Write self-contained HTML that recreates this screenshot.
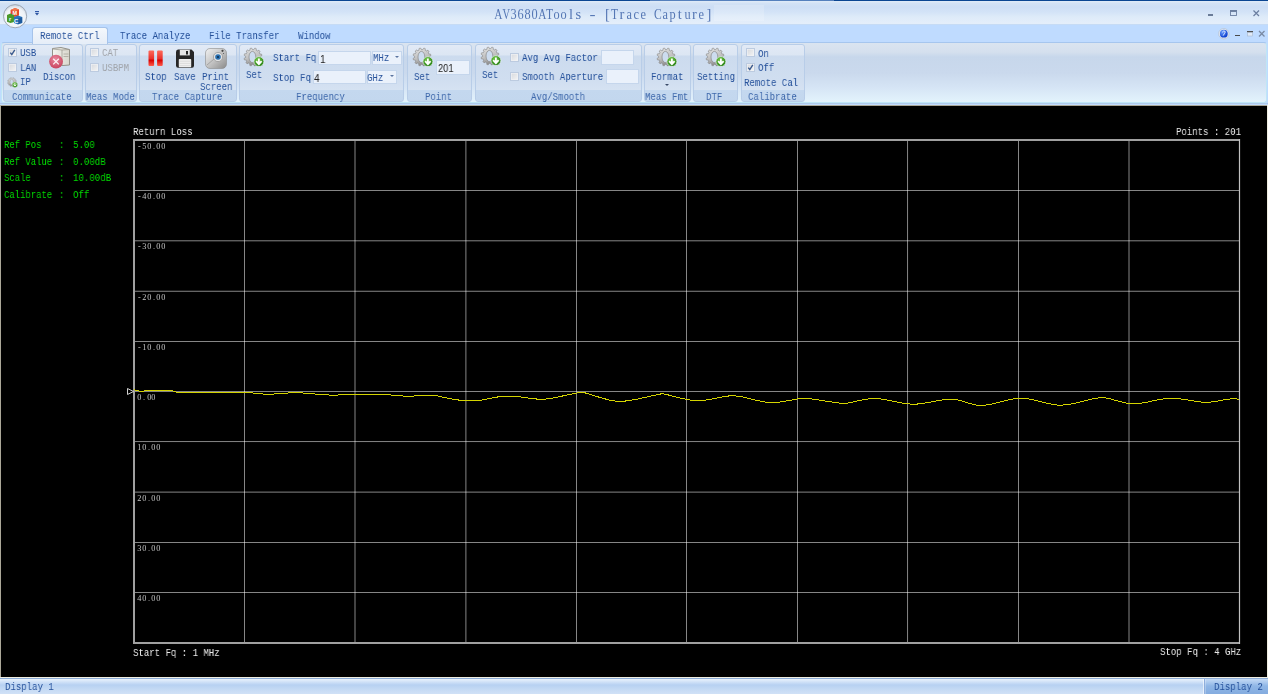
<!DOCTYPE html><html><head><meta charset="utf-8"><style>
html,body{margin:0;padding:0;width:1268px;height:694px;overflow:hidden;background:#bfdbff;position:relative}
.t{position:absolute;white-space:pre;transform-origin:0 0;will-change:transform}
</style></head><body>
<div style="position:absolute;left:0px;top:0px;width:1268px;height:24px;background:linear-gradient(#dde9f7 0px,#dde9f7 2px,#d3e2f5 3px,#cddef5 7px,#d3e3f7 12px,#deebf9 17px,#e4eefa 23px,#e4eefa 24px)"></div>
<div style="position:absolute;left:0px;top:0px;width:1268px;height:1px;background:#0a4592"></div>
<div style="position:absolute;left:650px;top:0px;width:184px;height:1px;background:#5580bd"></div>
<div style="position:absolute;left:714px;top:5px;width:50px;height:16px;background:rgba(255,255,255,0.18)"></div>
<div class="t" style="left:494.50px;top:7.00px;font-size:14.5px;line-height:14.5px;font-family:'Liberation Serif';color:#5476b4;font-weight:normal"><span style="display:inline-flex;justify-content:center;width:7.25px"><span style="display:inline-block;flex:none;transform:scaleX(0.780)">A</span></span><span style="display:inline-flex;justify-content:center;width:7.25px"><span style="display:inline-block;flex:none;transform:scaleX(0.720)">V</span></span><span style="display:inline-flex;justify-content:center;width:7.25px"><span style="display:inline-block;flex:none;transform:scaleX(0.850)">3</span></span><span style="display:inline-flex;justify-content:center;width:7.25px"><span style="display:inline-block;flex:none;transform:scaleX(0.850)">6</span></span><span style="display:inline-flex;justify-content:center;width:7.25px"><span style="display:inline-block;flex:none;transform:scaleX(0.850)">8</span></span><span style="display:inline-flex;justify-content:center;width:7.25px"><span style="display:inline-block;flex:none;transform:scaleX(0.850)">0</span></span><span style="display:inline-flex;justify-content:center;width:7.25px"><span style="display:inline-block;flex:none;transform:scaleX(0.780)">A</span></span><span style="display:inline-flex;justify-content:center;width:7.25px"><span style="display:inline-block;flex:none;transform:scaleX(0.800)">T</span></span><span style="display:inline-flex;justify-content:center;width:7.25px"><span style="display:inline-block;flex:none;transform:scaleX(0.850)">o</span></span><span style="display:inline-flex;justify-content:center;width:7.25px"><span style="display:inline-block;flex:none;transform:scaleX(0.850)">o</span></span><span style="display:inline-flex;justify-content:center;width:7.25px"><span style="display:inline-block;flex:none;transform:scaleX(1.000)">l</span></span><span style="display:inline-flex;justify-content:center;width:7.25px"><span style="display:inline-block;flex:none;transform:scaleX(1.000)">s</span></span><span style="display:inline-flex;justify-content:center;width:7.25px"><span style="display:inline-block;flex:none;transform:scaleX(1.000)">&nbsp;</span></span><span style="display:inline-flex;justify-content:center;width:7.25px"><span style="display:inline-block;flex:none;transform:scaleX(1.250)">-</span></span><span style="display:inline-flex;justify-content:center;width:7.25px"><span style="display:inline-block;flex:none;transform:scaleX(1.000)">&nbsp;</span></span><span style="display:inline-flex;justify-content:center;width:7.25px"><span style="display:inline-block;flex:none;transform:scaleX(1.000)">[</span></span><span style="display:inline-flex;justify-content:center;width:7.25px"><span style="display:inline-block;flex:none;transform:scaleX(0.800)">T</span></span><span style="display:inline-flex;justify-content:center;width:7.25px"><span style="display:inline-block;flex:none;transform:scaleX(1.000)">r</span></span><span style="display:inline-flex;justify-content:center;width:7.25px"><span style="display:inline-block;flex:none;transform:scaleX(0.850)">a</span></span><span style="display:inline-flex;justify-content:center;width:7.25px"><span style="display:inline-block;flex:none;transform:scaleX(0.850)">c</span></span><span style="display:inline-flex;justify-content:center;width:7.25px"><span style="display:inline-block;flex:none;transform:scaleX(0.850)">e</span></span><span style="display:inline-flex;justify-content:center;width:7.25px"><span style="display:inline-block;flex:none;transform:scaleX(1.000)">&nbsp;</span></span><span style="display:inline-flex;justify-content:center;width:7.25px"><span style="display:inline-block;flex:none;transform:scaleX(0.800)">C</span></span><span style="display:inline-flex;justify-content:center;width:7.25px"><span style="display:inline-block;flex:none;transform:scaleX(0.850)">a</span></span><span style="display:inline-flex;justify-content:center;width:7.25px"><span style="display:inline-block;flex:none;transform:scaleX(0.850)">p</span></span><span style="display:inline-flex;justify-content:center;width:7.25px"><span style="display:inline-block;flex:none;transform:scaleX(1.000)">t</span></span><span style="display:inline-flex;justify-content:center;width:7.25px"><span style="display:inline-block;flex:none;transform:scaleX(0.850)">u</span></span><span style="display:inline-flex;justify-content:center;width:7.25px"><span style="display:inline-block;flex:none;transform:scaleX(1.000)">r</span></span><span style="display:inline-flex;justify-content:center;width:7.25px"><span style="display:inline-block;flex:none;transform:scaleX(0.850)">e</span></span><span style="display:inline-flex;justify-content:center;width:7.25px"><span style="display:inline-block;flex:none;transform:scaleX(1.000)">]</span></span></div>
<div style="position:absolute;left:1208px;top:14px;width:5px;height:2px;background:#6a7c98"></div>
<svg style="position:absolute;left:1229px;top:9px" width="10" height="8"><rect x="1.5" y="2.5" width="6" height="4" fill="none" stroke="#6a7ea0" stroke-width="0.9"/><rect x="1" y="1" width="7" height="1.6" fill="#6a7ea0"/></svg>
<svg style="position:absolute;left:1252px;top:9px" width="9" height="9"><path d="M1.5 1.5 L7 7 M7 1.5 L1.5 7" stroke="#6a7ea0" stroke-width="1.2"/></svg>
<svg style="position:absolute;left:34px;top:11px" width="6" height="6"><rect x="1" y="0" width="4" height="1.2" fill="#2f58a8"/><path d="M1 2 L5 2 L3 4.4 Z" fill="#2a52a0"/></svg>
<div style="position:absolute;left:0px;top:24px;width:1268px;height:1px;background:#c6dbf5"></div>
<div style="position:absolute;left:0px;top:25px;width:1268px;height:17px;background:#bfdbff"></div>
<div class="t" style="left:119.72px;top:30.00px;font-size:11.5px;line-height:11.5px;font-family:'Liberation Mono';color:#24509a;transform:scaleX(0.785);font-weight:normal;">Trace Analyze</div>
<div class="t" style="left:208.72px;top:30.00px;font-size:11.5px;line-height:11.5px;font-family:'Liberation Mono';color:#24509a;transform:scaleX(0.785);font-weight:normal;">File Transfer</div>
<div class="t" style="left:298.21px;top:30.00px;font-size:11.5px;line-height:11.5px;font-family:'Liberation Mono';color:#24509a;transform:scaleX(0.785);font-weight:normal;">Window</div>
<svg style="position:absolute;left:1218px;top:28px" width="12" height="12"><defs><radialGradient id="hb" cx="35%" cy="30%" r="70%"><stop offset="0" stop-color="#6aa0ff"/><stop offset="1" stop-color="#0a3ccc"/></radialGradient></defs><circle cx="5.8" cy="5.7" r="5.2" fill="#e4ecf6" stroke="#b8c4d4" stroke-width="0.8"/><circle cx="5.8" cy="5.7" r="3.9" fill="url(#hb)"/><path d="M4.3 4.2 Q5.2 2.6 6.9 3.2 Q7.8 3.9 6.6 5.2 L5.2 7.6" stroke="#dfe8ff" stroke-width="1" fill="none"/></svg>
<div style="position:absolute;left:1235px;top:35px;width:5px;height:1px;background:#4a4a4a"></div>
<svg style="position:absolute;left:1246px;top:30px" width="8" height="8"><rect x="1" y="1" width="6" height="1.6" fill="#505050"/><rect x="1.5" y="2.5" width="5" height="3.5" fill="#e0eaf8" stroke="#a8b8cc" stroke-width="0.6"/></svg>
<svg style="position:absolute;left:1258px;top:30px" width="8" height="8"><path d="M1 1 L6.5 6.5 M6.5 1 L1 6.5" stroke="#7a8aa4" stroke-width="1.3"/></svg>
<div style="position:absolute;left:0px;top:42px;width:1268px;height:64px;background:#bfdbff"></div>
<div style="position:absolute;left:0px;top:103px;width:1268px;height:1px;background:#afc9ea"></div>
<div style="position:absolute;left:1px;top:42px;width:1266px;height:61px;background:linear-gradient(#dae4f0 0px,#d5e0ee 9px,#c7d7eb 14px,#cad9ed 30px,#d6e5f5 45px,#e2f2fc 58px);border:1px solid #bfe6f6;border-top-color:#a6c6ee;border-radius:3px;box-sizing:border-box"></div>
<div style="position:absolute;left:3px;top:44px;width:80px;height:58px;background:linear-gradient(#e2eaf6 0px,#dce6f3 10px,#ccdbee 11px,#d0def0 35px,#d5e2f2 45px,#c4d8ef 45px,#c3d7ee 56px);border:1px solid #b8cde8;border-radius:3px;box-sizing:border-box"></div>
<div class="t" style="left:12.02px;top:90.50px;font-size:11.5px;line-height:11.5px;font-family:'Liberation Mono';color:#3e68ab;transform:scaleX(0.785);font-weight:normal;">Communicate</div>
<div style="position:absolute;left:85px;top:44px;width:52px;height:58px;background:linear-gradient(#e2eaf6 0px,#dce6f3 10px,#ccdbee 11px,#d0def0 35px,#d5e2f2 45px,#c4d8ef 45px,#c3d7ee 56px);border:1px solid #b8cde8;border-radius:3px;box-sizing:border-box"></div>
<div class="t" style="left:85.62px;top:90.50px;font-size:11.5px;line-height:11.5px;font-family:'Liberation Mono';color:#3e68ab;transform:scaleX(0.785);font-weight:normal;">Meas Mode</div>
<div style="position:absolute;left:139px;top:44px;width:98px;height:58px;background:linear-gradient(#e2eaf6 0px,#dce6f3 10px,#ccdbee 11px,#d0def0 35px,#d5e2f2 45px,#c4d8ef 45px,#c3d7ee 56px);border:1px solid #b8cde8;border-radius:3px;box-sizing:border-box"></div>
<div class="t" style="left:152.22px;top:90.50px;font-size:11.5px;line-height:11.5px;font-family:'Liberation Mono';color:#3e68ab;transform:scaleX(0.785);font-weight:normal;">Trace Capture</div>
<div style="position:absolute;left:239px;top:44px;width:165px;height:58px;background:linear-gradient(#e2eaf6 0px,#dce6f3 10px,#ccdbee 11px,#d0def0 35px,#d5e2f2 45px,#c4d8ef 45px,#c3d7ee 56px);border:1px solid #b8cde8;border-radius:3px;box-sizing:border-box"></div>
<div class="t" style="left:296.31px;top:90.50px;font-size:11.5px;line-height:11.5px;font-family:'Liberation Mono';color:#3e68ab;transform:scaleX(0.785);font-weight:normal;">Frequency</div>
<div style="position:absolute;left:407px;top:44px;width:65px;height:58px;background:linear-gradient(#e2eaf6 0px,#dce6f3 10px,#ccdbee 11px,#d0def0 35px,#d5e2f2 45px,#c4d8ef 45px,#c3d7ee 56px);border:1px solid #b8cde8;border-radius:3px;box-sizing:border-box"></div>
<div class="t" style="left:425.21px;top:90.50px;font-size:11.5px;line-height:11.5px;font-family:'Liberation Mono';color:#3e68ab;transform:scaleX(0.785);font-weight:normal;">Point</div>
<div style="position:absolute;left:475px;top:44px;width:167px;height:58px;background:linear-gradient(#e2eaf6 0px,#dce6f3 10px,#ccdbee 11px,#d0def0 35px,#d5e2f2 45px,#c4d8ef 45px,#c3d7ee 56px);border:1px solid #b8cde8;border-radius:3px;box-sizing:border-box"></div>
<div class="t" style="left:531.22px;top:90.50px;font-size:11.5px;line-height:11.5px;font-family:'Liberation Mono';color:#3e68ab;transform:scaleX(0.785);font-weight:normal;">Avg/Smooth</div>
<div style="position:absolute;left:644px;top:44px;width:47px;height:58px;background:linear-gradient(#e2eaf6 0px,#dce6f3 10px,#ccdbee 11px,#d0def0 35px,#d5e2f2 45px,#c4d8ef 45px,#c3d7ee 56px);border:1px solid #b8cde8;border-radius:3px;box-sizing:border-box"></div>
<div class="t" style="left:645.22px;top:90.50px;font-size:11.5px;line-height:11.5px;font-family:'Liberation Mono';color:#3e68ab;transform:scaleX(0.785);font-weight:normal;">Meas Fmt</div>
<div style="position:absolute;left:693px;top:44px;width:45px;height:58px;background:linear-gradient(#e2eaf6 0px,#dce6f3 10px,#ccdbee 11px,#d0def0 35px,#d5e2f2 45px,#c4d8ef 45px,#c3d7ee 56px);border:1px solid #b8cde8;border-radius:3px;box-sizing:border-box"></div>
<div class="t" style="left:706.22px;top:90.50px;font-size:11.5px;line-height:11.5px;font-family:'Liberation Mono';color:#3e68ab;transform:scaleX(0.785);font-weight:normal;">DTF</div>
<div style="position:absolute;left:741px;top:44px;width:64px;height:58px;background:linear-gradient(#e2eaf6 0px,#dce6f3 10px,#ccdbee 11px,#d0def0 35px,#d5e2f2 45px,#c4d8ef 45px,#c3d7ee 56px);border:1px solid #b8cde8;border-radius:3px;box-sizing:border-box"></div>
<div class="t" style="left:747.82px;top:90.50px;font-size:11.5px;line-height:11.5px;font-family:'Liberation Mono';color:#3e68ab;transform:scaleX(0.785);font-weight:normal;">Calibrate</div>
<div style="position:absolute;left:32px;top:27px;width:76px;height:17px;background:linear-gradient(#f4f8fc 0px,#eef3fa 6px,#e6edf7 16px);border:1px solid #a6c3ea;border-bottom:none;border-radius:3px 3px 0 0;box-sizing:border-box"></div>
<div style="position:absolute;left:33px;top:42px;width:74px;height:2px;background:#e6eef8"></div>
<div class="t" style="left:40.22px;top:30.00px;font-size:11.5px;line-height:11.5px;font-family:'Liberation Mono';color:#24509a;transform:scaleX(0.785);font-weight:normal;">Remote Ctrl</div>
<svg style="position:absolute;left:2px;top:3px" width="27" height="27" viewBox="0 0 27 27">
<defs><radialGradient id="ab" cx="50%" cy="60%" r="60%"><stop offset="0" stop-color="#ffffff"/><stop offset="0.75" stop-color="#eef2f7"/><stop offset="1" stop-color="#c5cfdb"/></radialGradient></defs>
<circle cx="13.1" cy="13.2" r="11.6" fill="url(#ab)" stroke="#9ea8b6" stroke-width="1"/>
<path d="M8.6 7 L13 5 L17 6.5 L17 12.5 L12.6 14 L8.6 12.5 Z" fill="#e24a28"/>
<path d="M8.6 7 L13 5 L17 6.5 L12.6 8.2 Z" fill="#f07a50"/>
<path d="M5 12 L8.5 10.5 L12 12 L12 19 L8.5 20 L5 18.8 Z" fill="#4a9a2a"/>
<path d="M12 14 L16 12.5 L20.2 14 L20.2 20 L16 21.4 L12 20 Z" fill="#2a74bd"/>
<path d="M16 15.5 L16 21 L20.2 19.8 L20.2 14.2 Z" fill="#1d5a9e"/>
<text x="12.8" y="12" font-family="Liberation Sans" font-size="5.5" font-weight="bold" fill="#fff" text-anchor="middle">M</text>
<text x="8" y="18" font-family="Liberation Sans" font-size="5.5" font-weight="bold" fill="#fff" text-anchor="middle">r</text>
<text x="14.2" y="19.6" font-family="Liberation Sans" font-size="6" font-weight="bold" fill="#fff" text-anchor="middle">C</text>
</svg>
<svg style="position:absolute;left:8px;top:48px" width="9" height="9"><defs><linearGradient id="cb8_48" x1="0" y1="0" x2="1" y2="1"><stop offset="0" stop-color="#d4d7dc"/><stop offset="1" stop-color="#f6f6f6"/></linearGradient></defs><rect x="0.5" y="0.5" width="8" height="8" fill="url(#cb8_48)" stroke="#bccbe0" stroke-width="1"/><rect x="1.5" y="1.5" width="6" height="6" fill="none" stroke="#f2f4f7" stroke-width="0.6"/><path d="M2.3 4.6 L3.8 6.6 L6.8 1.8" stroke="#3a5a8e" stroke-width="1.4" fill="none"/></svg>
<div class="t" style="left:19.71px;top:46.70px;font-size:11.5px;line-height:11.5px;font-family:'Liberation Mono';color:#24509a;transform:scaleX(0.785);font-weight:normal;">USB</div>
<svg style="position:absolute;left:8px;top:63px" width="9" height="9"><defs><linearGradient id="cb8_63" x1="0" y1="0" x2="1" y2="1"><stop offset="0" stop-color="#d4d7dc"/><stop offset="1" stop-color="#f6f6f6"/></linearGradient></defs><rect x="0.5" y="0.5" width="8" height="8" fill="url(#cb8_63)" stroke="#bccbe0" stroke-width="1"/><rect x="1.5" y="1.5" width="6" height="6" fill="none" stroke="#f2f4f7" stroke-width="0.6"/></svg>
<div class="t" style="left:19.71px;top:62.20px;font-size:11.5px;line-height:11.5px;font-family:'Liberation Mono';color:#24509a;transform:scaleX(0.785);font-weight:normal;">LAN</div>
<svg style="position:absolute;left:6.80px;top:76.50px" width="12.00" height="12.00" viewBox="0 0 24 24">
<defs><linearGradient id="gg1" x1="0.2" y1="0" x2="0.5" y2="1"><stop offset="0" stop-color="#e2e2e2"/><stop offset="0.55" stop-color="#c0c0c0"/><stop offset="1" stop-color="#848484"/></linearGradient>
<radialGradient id="gr1" cx="40%" cy="30%" r="70%"><stop offset="0" stop-color="#74c848"/><stop offset="1" stop-color="#278016"/></radialGradient></defs>
<polygon points="11.23,1.89 11.81,1.18 12.27,1.29 12.72,1.42 13.17,1.58 13.28,2.49 13.31,3.38 13.65,3.57 13.99,3.77 14.31,3.98 15.12,3.59 15.97,3.27 16.32,3.59 16.65,3.93 16.95,4.29 16.60,5.13 16.18,5.93 16.38,6.25 16.57,6.59 16.74,6.94 17.63,7.01 18.54,7.16 18.68,7.61 18.79,8.07 18.88,8.53 18.15,9.09 17.39,9.56 17.40,9.95 17.39,10.33 17.36,10.72 18.11,11.23 18.82,11.81 18.71,12.27 18.58,12.72 18.42,13.17 17.51,13.28 16.62,13.31 16.43,13.65 16.23,13.99 16.02,14.31 16.41,15.12 16.73,15.97 16.41,16.32 16.07,16.65 15.71,16.95 14.87,16.60 14.07,16.18 13.75,16.38 13.41,16.57 13.06,16.74 12.99,17.63 12.84,18.54 12.39,18.68 11.93,18.79 11.47,18.88 10.91,18.15 10.44,17.39 10.05,17.40 9.67,17.39 9.28,17.36 8.77,18.11 8.19,18.82 7.73,18.71 7.28,18.58 6.83,18.42 6.72,17.51 6.69,16.62 6.35,16.43 6.01,16.23 5.69,16.02 4.88,16.41 4.03,16.73 3.68,16.41 3.35,16.07 3.05,15.71 3.40,14.87 3.82,14.07 3.62,13.75 3.43,13.41 3.26,13.06 2.37,12.99 1.46,12.84 1.32,12.39 1.21,11.93 1.12,11.47 1.85,10.91 2.61,10.44 2.60,10.05 2.61,9.67 2.64,9.28 1.89,8.77 1.18,8.19 1.29,7.73 1.42,7.28 1.58,6.83 2.49,6.72 3.38,6.69 3.57,6.35 3.77,6.01 3.98,5.69 3.59,4.88 3.27,4.03 3.59,3.68 3.93,3.35 4.29,3.05 5.13,3.40 5.93,3.82 6.25,3.62 6.59,3.43 6.94,3.26 7.01,2.37 7.16,1.46 7.61,1.32 8.07,1.21 8.53,1.12 9.09,1.85 9.56,2.61 9.95,2.60 10.33,2.61 10.72,2.64" fill="url(#gg1)" stroke="#8a8a8a" stroke-width="0.7"/>
<ellipse cx="9.4" cy="10" rx="3.4" ry="5.6" fill="#cddcef" stroke="#8a8a8a" stroke-width="0.7"/>
<circle cx="15.8" cy="15.6" r="5.4" fill="url(#gr1)" stroke="#eef4fa" stroke-width="0.7"/><path d="M15.8 12.399999999999999 L15.8 17.6 M13.100000000000001 15.2 L15.8 18.1 L18.5 15.2" stroke="#fff" stroke-width="1.8" fill="none"/>
</svg>
<div class="t" style="left:19.71px;top:75.70px;font-size:11.5px;line-height:11.5px;font-family:'Liberation Mono';color:#24509a;transform:scaleX(0.785);font-weight:normal;">IP</div>
<svg style="position:absolute;left:48px;top:46px" width="24" height="24" viewBox="0 0 24 24">
<defs><linearGradient id="sv" x1="0" y1="0" x2="1" y2="0"><stop offset="0" stop-color="#f4f4f0"/><stop offset="1" stop-color="#d8d6cc"/></linearGradient>
<radialGradient id="rc" cx="45%" cy="35%" r="65%"><stop offset="0" stop-color="#ea8aa0"/><stop offset="1" stop-color="#c8445f"/></radialGradient></defs>
<path d="M4.5 2.5 L13 1.5 L21.5 3.5 L21.5 19 L15 19.5 L4.5 18.5 Z" fill="url(#sv)" stroke="#8a887e" stroke-width="0.9"/>
<path d="M4.5 3 L14 4 L21.5 3.5 M14 4 V19.5" stroke="#9a978c" stroke-width="0.7" fill="none"/>
<path d="M15.5 8 H20.5 M15.5 10.5 H20.5" stroke="#a8a69c" stroke-width="0.8"/>
<circle cx="8" cy="15.6" r="6.9" fill="url(#rc)"/>
<path d="M5.2 12.8 L10.8 18.4 M10.8 12.8 L5.2 18.4" stroke="#fff" stroke-width="1.3" opacity="0.9"/>
</svg>
<div class="t" style="left:43.22px;top:70.50px;font-size:11.5px;line-height:11.5px;font-family:'Liberation Mono';color:#24509a;transform:scaleX(0.785);font-weight:normal;">Discon</div>
<svg style="position:absolute;left:90px;top:48px" width="9" height="9"><defs><linearGradient id="cb90_48" x1="0" y1="0" x2="1" y2="1"><stop offset="0" stop-color="#d4d7dc"/><stop offset="1" stop-color="#f6f6f6"/></linearGradient></defs><rect x="0.5" y="0.5" width="8" height="8" fill="url(#cb90_48)" stroke="#bccbe0" stroke-width="1"/><rect x="1.5" y="1.5" width="6" height="6" fill="none" stroke="#f2f4f7" stroke-width="0.6"/></svg>
<div class="t" style="left:102.22px;top:46.70px;font-size:11.5px;line-height:11.5px;font-family:'Liberation Mono';color:#a0a4aa;transform:scaleX(0.785);font-weight:normal;">CAT</div>
<svg style="position:absolute;left:90px;top:63px" width="9" height="9"><defs><linearGradient id="cb90_63" x1="0" y1="0" x2="1" y2="1"><stop offset="0" stop-color="#d4d7dc"/><stop offset="1" stop-color="#f6f6f6"/></linearGradient></defs><rect x="0.5" y="0.5" width="8" height="8" fill="url(#cb90_63)" stroke="#bccbe0" stroke-width="1"/><rect x="1.5" y="1.5" width="6" height="6" fill="none" stroke="#f2f4f7" stroke-width="0.6"/></svg>
<div class="t" style="left:102.22px;top:61.70px;font-size:11.5px;line-height:11.5px;font-family:'Liberation Mono';color:#a0a4aa;transform:scaleX(0.785);font-weight:normal;">USBPM</div>
<svg style="position:absolute;left:148px;top:50px" width="16" height="17"><defs><linearGradient id="rb" x1="0" y1="0" x2="0" y2="1"><stop offset="0" stop-color="#ff6a5a"/><stop offset="0.55" stop-color="#e8302a"/><stop offset="0.62" stop-color="#d80000"/><stop offset="1" stop-color="#ff5a4a"/></linearGradient></defs><rect x="0.5" y="0.5" width="5.6" height="15.4" rx="1" fill="url(#rb)"/><rect x="9.1" y="0.5" width="5.6" height="15.4" rx="1" fill="url(#rb)"/></svg>
<div class="t" style="left:145.22px;top:70.50px;font-size:11.5px;line-height:11.5px;font-family:'Liberation Mono';color:#24509a;transform:scaleX(0.785);font-weight:normal;">Stop</div>
<svg style="position:absolute;left:175px;top:49px" width="20" height="20" viewBox="0 0 20 20"><path d="M1 3 Q1 0.5 3 0.5 L16.5 0.5 L19 3 L19 16.5 Q19 18.8 17 18.8 L3 18.8 Q1 18.8 1 16.5 Z" fill="#262626"/><rect x="4.8" y="0.8" width="10" height="5.6" fill="#e6e6e6"/><rect x="11" y="2" width="2" height="3.5" fill="#262626"/><rect x="3.8" y="10" width="12.4" height="8.2" rx="0.8" fill="#efefef"/><path d="M4.5 12.2 H15.5 M4.5 14.4 H15.5 M4.5 16.6 H15.5" stroke="#cfcfcf" stroke-width="0.6"/></svg>
<div class="t" style="left:174.22px;top:70.50px;font-size:11.5px;line-height:11.5px;font-family:'Liberation Mono';color:#24509a;transform:scaleX(0.785);font-weight:normal;">Save</div>
<svg style="position:absolute;left:205px;top:48px" width="22" height="21" viewBox="0 0 22 21"><defs><linearGradient id="cm" x1="0" y1="0" x2="1" y2="1"><stop offset="0" stop-color="#f2f2f2"/><stop offset="0.5" stop-color="#c4c4c4"/><stop offset="1" stop-color="#8a8a8a"/></linearGradient></defs><rect x="0.5" y="0.5" width="21" height="20" rx="4.5" fill="url(#cm)" stroke="#8c8c8c" stroke-width="0.6"/><path d="M2 17 L9 11" stroke="#9a9a9a" stroke-width="0.8"/><circle cx="13" cy="9" r="4.6" fill="#e2e2e2" stroke="#9a9a9a" stroke-width="0.8"/><circle cx="13" cy="9" r="2.8" fill="#2a70b0"/><circle cx="13" cy="9" r="1" fill="#0b2b4a"/><circle cx="17.5" cy="2.8" r="1.1" fill="#444"/><circle cx="18.5" cy="5.5" r="0.6" fill="#555"/></svg>
<div class="t" style="left:202.22px;top:70.50px;font-size:11.5px;line-height:11.5px;font-family:'Liberation Mono';color:#24509a;transform:scaleX(0.785);font-weight:normal;">Print</div>
<div class="t" style="left:200.22px;top:80.70px;font-size:11.5px;line-height:11.5px;font-family:'Liberation Mono';color:#24509a;transform:scaleX(0.785);font-weight:normal;">Screen</div>
<svg style="position:absolute;left:243.30px;top:46.50px" width="24.00" height="24.00" viewBox="0 0 24 24">
<defs><linearGradient id="gg2" x1="0.2" y1="0" x2="0.5" y2="1"><stop offset="0" stop-color="#e2e2e2"/><stop offset="0.55" stop-color="#c0c0c0"/><stop offset="1" stop-color="#848484"/></linearGradient>
<radialGradient id="gr2" cx="40%" cy="30%" r="70%"><stop offset="0" stop-color="#74c848"/><stop offset="1" stop-color="#278016"/></radialGradient></defs>
<polygon points="11.23,1.89 11.81,1.18 12.27,1.29 12.72,1.42 13.17,1.58 13.28,2.49 13.31,3.38 13.65,3.57 13.99,3.77 14.31,3.98 15.12,3.59 15.97,3.27 16.32,3.59 16.65,3.93 16.95,4.29 16.60,5.13 16.18,5.93 16.38,6.25 16.57,6.59 16.74,6.94 17.63,7.01 18.54,7.16 18.68,7.61 18.79,8.07 18.88,8.53 18.15,9.09 17.39,9.56 17.40,9.95 17.39,10.33 17.36,10.72 18.11,11.23 18.82,11.81 18.71,12.27 18.58,12.72 18.42,13.17 17.51,13.28 16.62,13.31 16.43,13.65 16.23,13.99 16.02,14.31 16.41,15.12 16.73,15.97 16.41,16.32 16.07,16.65 15.71,16.95 14.87,16.60 14.07,16.18 13.75,16.38 13.41,16.57 13.06,16.74 12.99,17.63 12.84,18.54 12.39,18.68 11.93,18.79 11.47,18.88 10.91,18.15 10.44,17.39 10.05,17.40 9.67,17.39 9.28,17.36 8.77,18.11 8.19,18.82 7.73,18.71 7.28,18.58 6.83,18.42 6.72,17.51 6.69,16.62 6.35,16.43 6.01,16.23 5.69,16.02 4.88,16.41 4.03,16.73 3.68,16.41 3.35,16.07 3.05,15.71 3.40,14.87 3.82,14.07 3.62,13.75 3.43,13.41 3.26,13.06 2.37,12.99 1.46,12.84 1.32,12.39 1.21,11.93 1.12,11.47 1.85,10.91 2.61,10.44 2.60,10.05 2.61,9.67 2.64,9.28 1.89,8.77 1.18,8.19 1.29,7.73 1.42,7.28 1.58,6.83 2.49,6.72 3.38,6.69 3.57,6.35 3.77,6.01 3.98,5.69 3.59,4.88 3.27,4.03 3.59,3.68 3.93,3.35 4.29,3.05 5.13,3.40 5.93,3.82 6.25,3.62 6.59,3.43 6.94,3.26 7.01,2.37 7.16,1.46 7.61,1.32 8.07,1.21 8.53,1.12 9.09,1.85 9.56,2.61 9.95,2.60 10.33,2.61 10.72,2.64" fill="url(#gg2)" stroke="#8a8a8a" stroke-width="0.7"/>
<ellipse cx="9.4" cy="10" rx="3.4" ry="5.6" fill="#cddcef" stroke="#8a8a8a" stroke-width="0.7"/>
<circle cx="15.9" cy="14.6" r="5.0" fill="url(#gr2)" stroke="#eef4fa" stroke-width="0.7"/><path d="M15.9 11.399999999999999 L15.9 16.6 M13.2 14.2 L15.9 17.1 L18.6 14.2" stroke="#fff" stroke-width="1.8" fill="none"/>
</svg>
<div class="t" style="left:246.22px;top:69.40px;font-size:11.5px;line-height:11.5px;font-family:'Liberation Mono';color:#24509a;transform:scaleX(0.785);font-weight:normal;">Set</div>
<div class="t" style="left:272.71px;top:52.20px;font-size:11.5px;line-height:11.5px;font-family:'Liberation Mono';color:#24509a;transform:scaleX(0.785);font-weight:normal;">Start Fq</div>
<div class="t" style="left:272.71px;top:71.50px;font-size:11.5px;line-height:11.5px;font-family:'Liberation Mono';color:#24509a;transform:scaleX(0.785);font-weight:normal;">Stop Fq</div>
<div style="position:absolute;left:318px;top:51px;width:53px;height:14px;background:#eaf1fb;border:1px solid #c5d6ec;box-sizing:border-box"></div>
<div style="position:absolute;left:372px;top:51px;width:30px;height:14px;background:#eaf1fb;border:1px solid #c5d6ec;box-sizing:border-box"></div>
<div class="t" style="left:372.71px;top:52.20px;font-size:11.5px;line-height:11.5px;font-family:'Liberation Mono';color:#24509a;transform:scaleX(0.785);font-weight:normal;">MHz</div>
<svg style="position:absolute;left:395px;top:56px" width="5" height="3"><path d="M0 0 H4 L2 2Z" fill="#5a74a0"/></svg>
<div class="t" style="left:320.10px;top:53.50px;font-size:11px;line-height:11px;font-family:'Liberation Sans';color:#202020;transform:scaleX(0.9);font-weight:normal;">1</div>
<div style="position:absolute;left:313px;top:70px;width:53px;height:14px;background:#eaf1fb;border:1px solid #c5d6ec;box-sizing:border-box"></div>
<div style="position:absolute;left:367px;top:70px;width:30px;height:14px;background:#eaf1fb;border:1px solid #c5d6ec;box-sizing:border-box"></div>
<div class="t" style="left:367.21px;top:71.50px;font-size:11.5px;line-height:11.5px;font-family:'Liberation Mono';color:#24509a;transform:scaleX(0.785);font-weight:normal;">GHz</div>
<svg style="position:absolute;left:390px;top:75px" width="5" height="3"><path d="M0 0 H4 L2 2Z" fill="#5a74a0"/></svg>
<div class="t" style="left:314.10px;top:72.50px;font-size:11px;line-height:11px;font-family:'Liberation Sans';color:#202020;transform:scaleX(0.9);font-weight:normal;">4</div>
<svg style="position:absolute;left:411.90px;top:47.40px" width="24.00" height="24.00" viewBox="0 0 24 24">
<defs><linearGradient id="gg3" x1="0.2" y1="0" x2="0.5" y2="1"><stop offset="0" stop-color="#e2e2e2"/><stop offset="0.55" stop-color="#c0c0c0"/><stop offset="1" stop-color="#848484"/></linearGradient>
<radialGradient id="gr3" cx="40%" cy="30%" r="70%"><stop offset="0" stop-color="#74c848"/><stop offset="1" stop-color="#278016"/></radialGradient></defs>
<polygon points="11.23,1.89 11.81,1.18 12.27,1.29 12.72,1.42 13.17,1.58 13.28,2.49 13.31,3.38 13.65,3.57 13.99,3.77 14.31,3.98 15.12,3.59 15.97,3.27 16.32,3.59 16.65,3.93 16.95,4.29 16.60,5.13 16.18,5.93 16.38,6.25 16.57,6.59 16.74,6.94 17.63,7.01 18.54,7.16 18.68,7.61 18.79,8.07 18.88,8.53 18.15,9.09 17.39,9.56 17.40,9.95 17.39,10.33 17.36,10.72 18.11,11.23 18.82,11.81 18.71,12.27 18.58,12.72 18.42,13.17 17.51,13.28 16.62,13.31 16.43,13.65 16.23,13.99 16.02,14.31 16.41,15.12 16.73,15.97 16.41,16.32 16.07,16.65 15.71,16.95 14.87,16.60 14.07,16.18 13.75,16.38 13.41,16.57 13.06,16.74 12.99,17.63 12.84,18.54 12.39,18.68 11.93,18.79 11.47,18.88 10.91,18.15 10.44,17.39 10.05,17.40 9.67,17.39 9.28,17.36 8.77,18.11 8.19,18.82 7.73,18.71 7.28,18.58 6.83,18.42 6.72,17.51 6.69,16.62 6.35,16.43 6.01,16.23 5.69,16.02 4.88,16.41 4.03,16.73 3.68,16.41 3.35,16.07 3.05,15.71 3.40,14.87 3.82,14.07 3.62,13.75 3.43,13.41 3.26,13.06 2.37,12.99 1.46,12.84 1.32,12.39 1.21,11.93 1.12,11.47 1.85,10.91 2.61,10.44 2.60,10.05 2.61,9.67 2.64,9.28 1.89,8.77 1.18,8.19 1.29,7.73 1.42,7.28 1.58,6.83 2.49,6.72 3.38,6.69 3.57,6.35 3.77,6.01 3.98,5.69 3.59,4.88 3.27,4.03 3.59,3.68 3.93,3.35 4.29,3.05 5.13,3.40 5.93,3.82 6.25,3.62 6.59,3.43 6.94,3.26 7.01,2.37 7.16,1.46 7.61,1.32 8.07,1.21 8.53,1.12 9.09,1.85 9.56,2.61 9.95,2.60 10.33,2.61 10.72,2.64" fill="url(#gg3)" stroke="#8a8a8a" stroke-width="0.7"/>
<ellipse cx="9.4" cy="10" rx="3.4" ry="5.6" fill="#cddcef" stroke="#8a8a8a" stroke-width="0.7"/>
<circle cx="15.9" cy="14.6" r="5.0" fill="url(#gr3)" stroke="#eef4fa" stroke-width="0.7"/><path d="M15.9 11.399999999999999 L15.9 16.6 M13.2 14.2 L15.9 17.1 L18.6 14.2" stroke="#fff" stroke-width="1.8" fill="none"/>
</svg>
<div class="t" style="left:414.21px;top:70.80px;font-size:11.5px;line-height:11.5px;font-family:'Liberation Mono';color:#24509a;transform:scaleX(0.785);font-weight:normal;">Set</div>
<div style="position:absolute;left:436px;top:60px;width:34px;height:15px;background:#eaf1fb;border:1px solid #c5d6ec;box-sizing:border-box"></div>
<div class="t" style="left:438.15px;top:62.70px;font-size:11px;line-height:11px;font-family:'Liberation Sans';color:#202020;transform:scaleX(0.85);font-weight:normal;">201</div>
<svg style="position:absolute;left:479.50px;top:46.40px" width="24.00" height="24.00" viewBox="0 0 24 24">
<defs><linearGradient id="gg4" x1="0.2" y1="0" x2="0.5" y2="1"><stop offset="0" stop-color="#e2e2e2"/><stop offset="0.55" stop-color="#c0c0c0"/><stop offset="1" stop-color="#848484"/></linearGradient>
<radialGradient id="gr4" cx="40%" cy="30%" r="70%"><stop offset="0" stop-color="#74c848"/><stop offset="1" stop-color="#278016"/></radialGradient></defs>
<polygon points="11.23,1.89 11.81,1.18 12.27,1.29 12.72,1.42 13.17,1.58 13.28,2.49 13.31,3.38 13.65,3.57 13.99,3.77 14.31,3.98 15.12,3.59 15.97,3.27 16.32,3.59 16.65,3.93 16.95,4.29 16.60,5.13 16.18,5.93 16.38,6.25 16.57,6.59 16.74,6.94 17.63,7.01 18.54,7.16 18.68,7.61 18.79,8.07 18.88,8.53 18.15,9.09 17.39,9.56 17.40,9.95 17.39,10.33 17.36,10.72 18.11,11.23 18.82,11.81 18.71,12.27 18.58,12.72 18.42,13.17 17.51,13.28 16.62,13.31 16.43,13.65 16.23,13.99 16.02,14.31 16.41,15.12 16.73,15.97 16.41,16.32 16.07,16.65 15.71,16.95 14.87,16.60 14.07,16.18 13.75,16.38 13.41,16.57 13.06,16.74 12.99,17.63 12.84,18.54 12.39,18.68 11.93,18.79 11.47,18.88 10.91,18.15 10.44,17.39 10.05,17.40 9.67,17.39 9.28,17.36 8.77,18.11 8.19,18.82 7.73,18.71 7.28,18.58 6.83,18.42 6.72,17.51 6.69,16.62 6.35,16.43 6.01,16.23 5.69,16.02 4.88,16.41 4.03,16.73 3.68,16.41 3.35,16.07 3.05,15.71 3.40,14.87 3.82,14.07 3.62,13.75 3.43,13.41 3.26,13.06 2.37,12.99 1.46,12.84 1.32,12.39 1.21,11.93 1.12,11.47 1.85,10.91 2.61,10.44 2.60,10.05 2.61,9.67 2.64,9.28 1.89,8.77 1.18,8.19 1.29,7.73 1.42,7.28 1.58,6.83 2.49,6.72 3.38,6.69 3.57,6.35 3.77,6.01 3.98,5.69 3.59,4.88 3.27,4.03 3.59,3.68 3.93,3.35 4.29,3.05 5.13,3.40 5.93,3.82 6.25,3.62 6.59,3.43 6.94,3.26 7.01,2.37 7.16,1.46 7.61,1.32 8.07,1.21 8.53,1.12 9.09,1.85 9.56,2.61 9.95,2.60 10.33,2.61 10.72,2.64" fill="url(#gg4)" stroke="#8a8a8a" stroke-width="0.7"/>
<ellipse cx="9.4" cy="10" rx="3.4" ry="5.6" fill="#cddcef" stroke="#8a8a8a" stroke-width="0.7"/>
<circle cx="15.9" cy="14.6" r="5.0" fill="url(#gr4)" stroke="#eef4fa" stroke-width="0.7"/><path d="M15.9 11.399999999999999 L15.9 16.6 M13.2 14.2 L15.9 17.1 L18.6 14.2" stroke="#fff" stroke-width="1.8" fill="none"/>
</svg>
<div class="t" style="left:482.21px;top:69.00px;font-size:11.5px;line-height:11.5px;font-family:'Liberation Mono';color:#24509a;transform:scaleX(0.785);font-weight:normal;">Set</div>
<svg style="position:absolute;left:510px;top:53px" width="9" height="9"><defs><linearGradient id="cb510_53" x1="0" y1="0" x2="1" y2="1"><stop offset="0" stop-color="#d4d7dc"/><stop offset="1" stop-color="#f6f6f6"/></linearGradient></defs><rect x="0.5" y="0.5" width="8" height="8" fill="url(#cb510_53)" stroke="#bccbe0" stroke-width="1"/><rect x="1.5" y="1.5" width="6" height="6" fill="none" stroke="#f2f4f7" stroke-width="0.6"/></svg>
<div class="t" style="left:521.72px;top:51.90px;font-size:11.5px;line-height:11.5px;font-family:'Liberation Mono';color:#24509a;transform:scaleX(0.785);font-weight:normal;">Avg Avg Factor</div>
<svg style="position:absolute;left:510px;top:72px" width="9" height="9"><defs><linearGradient id="cb510_72" x1="0" y1="0" x2="1" y2="1"><stop offset="0" stop-color="#d4d7dc"/><stop offset="1" stop-color="#f6f6f6"/></linearGradient></defs><rect x="0.5" y="0.5" width="8" height="8" fill="url(#cb510_72)" stroke="#bccbe0" stroke-width="1"/><rect x="1.5" y="1.5" width="6" height="6" fill="none" stroke="#f2f4f7" stroke-width="0.6"/></svg>
<div class="t" style="left:521.72px;top:70.80px;font-size:11.5px;line-height:11.5px;font-family:'Liberation Mono';color:#24509a;transform:scaleX(0.785);font-weight:normal;">Smooth Aperture</div>
<div style="position:absolute;left:601px;top:50px;width:33px;height:15px;background:#eaf1fb;border:1px solid #c5d6ec;box-sizing:border-box"></div>
<div style="position:absolute;left:606px;top:69px;width:33px;height:15px;background:#eaf1fb;border:1px solid #c5d6ec;box-sizing:border-box"></div>
<svg style="position:absolute;left:656.10px;top:47.40px" width="24.00" height="24.00" viewBox="0 0 24 24">
<defs><linearGradient id="gg5" x1="0.2" y1="0" x2="0.5" y2="1"><stop offset="0" stop-color="#e2e2e2"/><stop offset="0.55" stop-color="#c0c0c0"/><stop offset="1" stop-color="#848484"/></linearGradient>
<radialGradient id="gr5" cx="40%" cy="30%" r="70%"><stop offset="0" stop-color="#74c848"/><stop offset="1" stop-color="#278016"/></radialGradient></defs>
<polygon points="11.23,1.89 11.81,1.18 12.27,1.29 12.72,1.42 13.17,1.58 13.28,2.49 13.31,3.38 13.65,3.57 13.99,3.77 14.31,3.98 15.12,3.59 15.97,3.27 16.32,3.59 16.65,3.93 16.95,4.29 16.60,5.13 16.18,5.93 16.38,6.25 16.57,6.59 16.74,6.94 17.63,7.01 18.54,7.16 18.68,7.61 18.79,8.07 18.88,8.53 18.15,9.09 17.39,9.56 17.40,9.95 17.39,10.33 17.36,10.72 18.11,11.23 18.82,11.81 18.71,12.27 18.58,12.72 18.42,13.17 17.51,13.28 16.62,13.31 16.43,13.65 16.23,13.99 16.02,14.31 16.41,15.12 16.73,15.97 16.41,16.32 16.07,16.65 15.71,16.95 14.87,16.60 14.07,16.18 13.75,16.38 13.41,16.57 13.06,16.74 12.99,17.63 12.84,18.54 12.39,18.68 11.93,18.79 11.47,18.88 10.91,18.15 10.44,17.39 10.05,17.40 9.67,17.39 9.28,17.36 8.77,18.11 8.19,18.82 7.73,18.71 7.28,18.58 6.83,18.42 6.72,17.51 6.69,16.62 6.35,16.43 6.01,16.23 5.69,16.02 4.88,16.41 4.03,16.73 3.68,16.41 3.35,16.07 3.05,15.71 3.40,14.87 3.82,14.07 3.62,13.75 3.43,13.41 3.26,13.06 2.37,12.99 1.46,12.84 1.32,12.39 1.21,11.93 1.12,11.47 1.85,10.91 2.61,10.44 2.60,10.05 2.61,9.67 2.64,9.28 1.89,8.77 1.18,8.19 1.29,7.73 1.42,7.28 1.58,6.83 2.49,6.72 3.38,6.69 3.57,6.35 3.77,6.01 3.98,5.69 3.59,4.88 3.27,4.03 3.59,3.68 3.93,3.35 4.29,3.05 5.13,3.40 5.93,3.82 6.25,3.62 6.59,3.43 6.94,3.26 7.01,2.37 7.16,1.46 7.61,1.32 8.07,1.21 8.53,1.12 9.09,1.85 9.56,2.61 9.95,2.60 10.33,2.61 10.72,2.64" fill="url(#gg5)" stroke="#8a8a8a" stroke-width="0.7"/>
<ellipse cx="9.4" cy="10" rx="3.4" ry="5.6" fill="#cddcef" stroke="#8a8a8a" stroke-width="0.7"/>
<circle cx="15.9" cy="14.6" r="5.0" fill="url(#gr5)" stroke="#eef4fa" stroke-width="0.7"/><path d="M15.9 11.399999999999999 L15.9 16.6 M13.2 14.2 L15.9 17.1 L18.6 14.2" stroke="#fff" stroke-width="1.8" fill="none"/>
</svg>
<div class="t" style="left:650.72px;top:70.50px;font-size:11.5px;line-height:11.5px;font-family:'Liberation Mono';color:#24509a;transform:scaleX(0.785);font-weight:normal;">Format</div>
<svg style="position:absolute;left:665px;top:84px" width="5" height="3"><path d="M0 0 H4 L2 2Z" fill="#3a4a68"/></svg>
<svg style="position:absolute;left:704.60px;top:47.40px" width="24.00" height="24.00" viewBox="0 0 24 24">
<defs><linearGradient id="gg6" x1="0.2" y1="0" x2="0.5" y2="1"><stop offset="0" stop-color="#e2e2e2"/><stop offset="0.55" stop-color="#c0c0c0"/><stop offset="1" stop-color="#848484"/></linearGradient>
<radialGradient id="gr6" cx="40%" cy="30%" r="70%"><stop offset="0" stop-color="#74c848"/><stop offset="1" stop-color="#278016"/></radialGradient></defs>
<polygon points="11.23,1.89 11.81,1.18 12.27,1.29 12.72,1.42 13.17,1.58 13.28,2.49 13.31,3.38 13.65,3.57 13.99,3.77 14.31,3.98 15.12,3.59 15.97,3.27 16.32,3.59 16.65,3.93 16.95,4.29 16.60,5.13 16.18,5.93 16.38,6.25 16.57,6.59 16.74,6.94 17.63,7.01 18.54,7.16 18.68,7.61 18.79,8.07 18.88,8.53 18.15,9.09 17.39,9.56 17.40,9.95 17.39,10.33 17.36,10.72 18.11,11.23 18.82,11.81 18.71,12.27 18.58,12.72 18.42,13.17 17.51,13.28 16.62,13.31 16.43,13.65 16.23,13.99 16.02,14.31 16.41,15.12 16.73,15.97 16.41,16.32 16.07,16.65 15.71,16.95 14.87,16.60 14.07,16.18 13.75,16.38 13.41,16.57 13.06,16.74 12.99,17.63 12.84,18.54 12.39,18.68 11.93,18.79 11.47,18.88 10.91,18.15 10.44,17.39 10.05,17.40 9.67,17.39 9.28,17.36 8.77,18.11 8.19,18.82 7.73,18.71 7.28,18.58 6.83,18.42 6.72,17.51 6.69,16.62 6.35,16.43 6.01,16.23 5.69,16.02 4.88,16.41 4.03,16.73 3.68,16.41 3.35,16.07 3.05,15.71 3.40,14.87 3.82,14.07 3.62,13.75 3.43,13.41 3.26,13.06 2.37,12.99 1.46,12.84 1.32,12.39 1.21,11.93 1.12,11.47 1.85,10.91 2.61,10.44 2.60,10.05 2.61,9.67 2.64,9.28 1.89,8.77 1.18,8.19 1.29,7.73 1.42,7.28 1.58,6.83 2.49,6.72 3.38,6.69 3.57,6.35 3.77,6.01 3.98,5.69 3.59,4.88 3.27,4.03 3.59,3.68 3.93,3.35 4.29,3.05 5.13,3.40 5.93,3.82 6.25,3.62 6.59,3.43 6.94,3.26 7.01,2.37 7.16,1.46 7.61,1.32 8.07,1.21 8.53,1.12 9.09,1.85 9.56,2.61 9.95,2.60 10.33,2.61 10.72,2.64" fill="url(#gg6)" stroke="#8a8a8a" stroke-width="0.7"/>
<ellipse cx="9.4" cy="10" rx="3.4" ry="5.6" fill="#cddcef" stroke="#8a8a8a" stroke-width="0.7"/>
<circle cx="15.9" cy="14.6" r="5.0" fill="url(#gr6)" stroke="#eef4fa" stroke-width="0.7"/><path d="M15.9 11.399999999999999 L15.9 16.6 M13.2 14.2 L15.9 17.1 L18.6 14.2" stroke="#fff" stroke-width="1.8" fill="none"/>
</svg>
<div class="t" style="left:696.72px;top:70.50px;font-size:11.5px;line-height:11.5px;font-family:'Liberation Mono';color:#24509a;transform:scaleX(0.785);font-weight:normal;">Setting</div>
<svg style="position:absolute;left:746px;top:48px" width="9" height="9"><defs><linearGradient id="cb746_48" x1="0" y1="0" x2="1" y2="1"><stop offset="0" stop-color="#d4d7dc"/><stop offset="1" stop-color="#f6f6f6"/></linearGradient></defs><rect x="0.5" y="0.5" width="8" height="8" fill="url(#cb746_48)" stroke="#bccbe0" stroke-width="1"/><rect x="1.5" y="1.5" width="6" height="6" fill="none" stroke="#f2f4f7" stroke-width="0.6"/></svg>
<div class="t" style="left:757.72px;top:47.70px;font-size:11.5px;line-height:11.5px;font-family:'Liberation Mono';color:#24509a;transform:scaleX(0.785);font-weight:normal;">On</div>
<svg style="position:absolute;left:746px;top:63px" width="9" height="9"><defs><linearGradient id="cb746_63" x1="0" y1="0" x2="1" y2="1"><stop offset="0" stop-color="#d4d7dc"/><stop offset="1" stop-color="#f6f6f6"/></linearGradient></defs><rect x="0.5" y="0.5" width="8" height="8" fill="url(#cb746_63)" stroke="#bccbe0" stroke-width="1"/><rect x="1.5" y="1.5" width="6" height="6" fill="none" stroke="#f2f4f7" stroke-width="0.6"/><path d="M2.3 4.6 L3.8 6.6 L6.8 1.8" stroke="#3a5a8e" stroke-width="1.4" fill="none"/></svg>
<div class="t" style="left:757.72px;top:61.70px;font-size:11.5px;line-height:11.5px;font-family:'Liberation Mono';color:#24509a;transform:scaleX(0.785);font-weight:normal;">Off</div>
<div class="t" style="left:744.22px;top:76.90px;font-size:11.5px;line-height:11.5px;font-family:'Liberation Mono';color:#24509a;transform:scaleX(0.785);font-weight:normal;">Remote Cal</div>
<div style="position:absolute;left:0px;top:104px;width:1268px;height:1px;background:#bfdbff"></div>
<div style="position:absolute;left:0px;top:105px;width:1268px;height:573px;background:#aca899"></div>
<div style="position:absolute;left:1px;top:106px;width:1266px;height:571px;background:#000"></div>
<div style="position:absolute;left:1267px;top:105px;width:1px;height:573px;background:#f1efe2"></div>
<div style="position:absolute;left:0px;top:677px;width:1268px;height:1px;background:#f1efe2"></div>
<svg style="position:absolute;left:0;top:0" width="1268" height="694">
<line x1="244.50" y1="140.25" x2="244.50" y2="642.75" stroke="#fff" stroke-opacity="0.6" stroke-width="0.88"/>
<line x1="133.94" y1="190.50" x2="1239.54" y2="190.50" stroke="#fff" stroke-opacity="0.6" stroke-width="0.88"/>
<line x1="355.00" y1="140.25" x2="355.00" y2="642.75" stroke="#fff" stroke-opacity="0.6" stroke-width="0.88"/>
<line x1="133.94" y1="240.81" x2="1239.54" y2="240.81" stroke="#fff" stroke-opacity="0.6" stroke-width="0.88"/>
<line x1="465.90" y1="140.25" x2="465.90" y2="642.75" stroke="#fff" stroke-opacity="0.6" stroke-width="0.88"/>
<line x1="133.94" y1="291.26" x2="1239.54" y2="291.26" stroke="#fff" stroke-opacity="0.6" stroke-width="0.88"/>
<line x1="576.50" y1="140.25" x2="576.50" y2="642.75" stroke="#fff" stroke-opacity="0.6" stroke-width="0.88"/>
<line x1="133.94" y1="341.50" x2="1239.54" y2="341.50" stroke="#fff" stroke-opacity="0.6" stroke-width="0.88"/>
<line x1="686.50" y1="140.25" x2="686.50" y2="642.75" stroke="#fff" stroke-opacity="0.6" stroke-width="0.88"/>
<line x1="133.94" y1="391.50" x2="1239.54" y2="391.50" stroke="#fff" stroke-opacity="0.6" stroke-width="0.88"/>
<line x1="797.50" y1="140.25" x2="797.50" y2="642.75" stroke="#fff" stroke-opacity="0.6" stroke-width="0.88"/>
<line x1="133.94" y1="441.56" x2="1239.54" y2="441.56" stroke="#fff" stroke-opacity="0.6" stroke-width="0.88"/>
<line x1="907.55" y1="140.25" x2="907.55" y2="642.75" stroke="#fff" stroke-opacity="0.6" stroke-width="0.88"/>
<line x1="133.94" y1="492.11" x2="1239.54" y2="492.11" stroke="#fff" stroke-opacity="0.6" stroke-width="0.88"/>
<line x1="1018.50" y1="140.25" x2="1018.50" y2="642.75" stroke="#fff" stroke-opacity="0.6" stroke-width="0.88"/>
<line x1="133.94" y1="542.50" x2="1239.54" y2="542.50" stroke="#fff" stroke-opacity="0.6" stroke-width="0.88"/>
<line x1="1129.00" y1="140.25" x2="1129.00" y2="642.75" stroke="#fff" stroke-opacity="0.6" stroke-width="0.88"/>
<line x1="133.94" y1="592.50" x2="1239.54" y2="592.50" stroke="#fff" stroke-opacity="0.6" stroke-width="0.88"/>
<path d="M134 139 V644 M133 140 H1240 M133 643 H1240" fill="none" stroke="#a0a0a0" stroke-width="2"/><path d="M1239.5 139 V644" stroke="#c0c0c0" stroke-width="1.2"/>
<path d="M134.00 389.00 C134.83 389.33 133.00 390.75 139.00 391.00 C145.00 391.25 163.83 390.33 170.00 390.50 C176.17 390.67 171.33 391.65 176.00 392.00 C180.67 392.35 187.17 392.57 198.00 392.60 C208.83 392.63 230.00 391.95 241.00 392.20 C252.00 392.45 259.17 393.73 264.00 394.10 C268.83 394.47 267.33 394.52 270.00 394.40 C272.67 394.28 275.33 393.67 280.00 393.40 C284.67 393.13 293.33 392.80 298.00 392.80 C302.67 392.80 304.33 393.13 308.00 393.40 C311.67 393.67 315.33 394.08 320.00 394.40 C324.67 394.72 332.17 395.30 336.00 395.30 C339.83 395.30 334.83 394.50 343.00 394.40 C351.17 394.30 374.00 394.37 385.00 394.70 C396.00 395.03 403.17 396.30 409.00 396.40 C414.83 396.50 415.83 395.48 420.00 395.30 C424.17 395.12 429.83 394.92 434.00 395.30 C438.17 395.68 440.67 396.78 445.00 397.60 C449.33 398.42 454.67 399.68 460.00 400.20 C465.33 400.72 469.90 401.35 477.00 400.70 C484.10 400.05 495.43 396.93 502.60 396.30 C509.77 395.67 514.77 396.48 520.00 396.90 C525.23 397.32 529.33 398.48 534.00 398.80 C538.67 399.12 540.88 399.75 548.00 398.80 C555.12 397.85 570.60 394.10 576.70 393.10 C582.80 392.10 577.50 391.42 584.60 392.80 C591.70 394.18 606.73 401.18 619.30 401.40 C631.87 401.62 652.43 395.32 660.00 394.10 C667.57 392.88 660.50 393.27 664.70 394.10 C668.90 394.93 679.15 398.00 685.20 399.10 C691.25 400.20 694.17 401.17 701.00 400.70 C707.83 400.23 719.88 397.03 726.20 396.30 C732.52 395.57 731.53 395.25 738.90 396.30 C746.27 397.35 760.42 402.18 770.40 402.60 C780.38 403.02 792.48 399.48 798.80 398.80 C805.12 398.12 800.93 397.75 808.30 398.50 C815.67 399.25 834.38 402.98 843.00 403.30 C851.62 403.62 854.27 401.20 860.00 400.40 C865.73 399.60 868.47 397.87 877.40 398.50 C886.33 399.13 901.25 404.10 913.60 404.20 C925.95 404.30 940.18 398.88 951.50 399.10 C962.82 399.32 969.93 405.65 981.50 405.50 C993.07 405.35 1007.82 398.25 1020.90 398.20 C1033.98 398.15 1047.43 405.20 1060.00 405.20 C1072.57 405.20 1088.42 399.37 1096.30 398.20 C1104.18 397.03 1101.00 397.25 1107.30 398.20 C1113.60 399.15 1123.58 403.90 1134.10 403.90 C1144.62 403.90 1158.57 398.47 1170.40 398.20 C1182.23 397.93 1195.37 402.15 1205.10 402.30 C1214.83 402.45 1223.15 399.63 1228.80 399.10 C1234.45 398.57 1237.30 399.10 1239.00 399.10" fill="none" stroke="#d4d400" stroke-width="1" shape-rendering="crispEdges"/>
<path d="M127.5 388.5 L133.5 391.5 L127.5 394.5 Z" fill="none" stroke="#d0d0d0" stroke-width="1"/>
</svg>
<div class="t" style="left:132.72px;top:125.70px;font-size:11.5px;line-height:11.5px;font-family:'Liberation Mono';color:#e8e8e8;transform:scaleX(0.785);font-weight:normal;">Return Loss</div>
<div class="t" style="left:1176.21px;top:125.80px;font-size:11.5px;line-height:11.5px;font-family:'Liberation Mono';color:#e8e8e8;transform:scaleX(0.785);font-weight:normal;">Points : 201</div>
<div class="t" style="left:133.22px;top:646.70px;font-size:11.5px;line-height:11.5px;font-family:'Liberation Mono';color:#e8e8e8;transform:scaleX(0.785);font-weight:normal;">Start Fq : 1 MHz</div>
<div class="t" style="left:1160.21px;top:646.20px;font-size:11.5px;line-height:11.5px;font-family:'Liberation Mono';color:#e8e8e8;transform:scaleX(0.785);font-weight:normal;">Stop Fq : 4 GHz</div>
<div class="t" style="left:3.73px;top:139.00px;font-size:11.5px;line-height:11.5px;font-family:'Liberation Mono';color:#00dc00;transform:scaleX(0.775);font-weight:normal;">Ref Pos</div>
<div class="t" style="left:58.70px;top:139.00px;font-size:11.5px;line-height:11.5px;font-family:'Liberation Mono';color:#00dc00;transform:scaleX(0.8);font-weight:normal;">:</div>
<div class="t" style="left:73.31px;top:139.00px;font-size:11.5px;line-height:11.5px;font-family:'Liberation Mono';color:#00dc00;transform:scaleX(0.79);font-weight:normal;">5.00</div>
<div class="t" style="left:3.73px;top:155.70px;font-size:11.5px;line-height:11.5px;font-family:'Liberation Mono';color:#00dc00;transform:scaleX(0.775);font-weight:normal;">Ref Value</div>
<div class="t" style="left:58.70px;top:155.70px;font-size:11.5px;line-height:11.5px;font-family:'Liberation Mono';color:#00dc00;transform:scaleX(0.8);font-weight:normal;">:</div>
<div class="t" style="left:73.31px;top:155.70px;font-size:11.5px;line-height:11.5px;font-family:'Liberation Mono';color:#00dc00;transform:scaleX(0.79);font-weight:normal;">0.00dB</div>
<div class="t" style="left:3.73px;top:172.00px;font-size:11.5px;line-height:11.5px;font-family:'Liberation Mono';color:#00dc00;transform:scaleX(0.775);font-weight:normal;">Scale</div>
<div class="t" style="left:58.70px;top:172.00px;font-size:11.5px;line-height:11.5px;font-family:'Liberation Mono';color:#00dc00;transform:scaleX(0.8);font-weight:normal;">:</div>
<div class="t" style="left:73.31px;top:172.00px;font-size:11.5px;line-height:11.5px;font-family:'Liberation Mono';color:#00dc00;transform:scaleX(0.79);font-weight:normal;">10.00dB</div>
<div class="t" style="left:3.73px;top:188.70px;font-size:11.5px;line-height:11.5px;font-family:'Liberation Mono';color:#00dc00;transform:scaleX(0.775);font-weight:normal;">Calibrate</div>
<div class="t" style="left:58.70px;top:188.70px;font-size:11.5px;line-height:11.5px;font-family:'Liberation Mono';color:#00dc00;transform:scaleX(0.8);font-weight:normal;">:</div>
<div class="t" style="left:73.31px;top:188.70px;font-size:11.5px;line-height:11.5px;font-family:'Liberation Mono';color:#00dc00;transform:scaleX(0.79);font-weight:normal;">Off</div>
<div class="t" style="left:136.60px;top:141.85px;font-size:9px;line-height:9px;font-family:'Liberation Serif';color:#c4c4c4;font-weight:normal"><span style="display:inline-flex;justify-content:center;width:4.75px"><span style="display:inline-block;flex:none;transform:scaleX(0.920)">-</span></span><span style="display:inline-flex;justify-content:center;width:4.75px"><span style="display:inline-block;flex:none;transform:scaleX(0.920)">5</span></span><span style="display:inline-flex;justify-content:center;width:4.75px"><span style="display:inline-block;flex:none;transform:scaleX(0.920)">0</span></span><span style="display:inline-flex;justify-content:center;width:4.75px"><span style="display:inline-block;flex:none;transform:scaleX(0.920)">.</span></span><span style="display:inline-flex;justify-content:center;width:4.75px"><span style="display:inline-block;flex:none;transform:scaleX(0.920)">0</span></span><span style="display:inline-flex;justify-content:center;width:4.75px"><span style="display:inline-block;flex:none;transform:scaleX(0.920)">0</span></span></div>
<div class="t" style="left:136.60px;top:192.10px;font-size:9px;line-height:9px;font-family:'Liberation Serif';color:#c4c4c4;font-weight:normal"><span style="display:inline-flex;justify-content:center;width:4.75px"><span style="display:inline-block;flex:none;transform:scaleX(0.920)">-</span></span><span style="display:inline-flex;justify-content:center;width:4.75px"><span style="display:inline-block;flex:none;transform:scaleX(0.920)">4</span></span><span style="display:inline-flex;justify-content:center;width:4.75px"><span style="display:inline-block;flex:none;transform:scaleX(0.920)">0</span></span><span style="display:inline-flex;justify-content:center;width:4.75px"><span style="display:inline-block;flex:none;transform:scaleX(0.920)">.</span></span><span style="display:inline-flex;justify-content:center;width:4.75px"><span style="display:inline-block;flex:none;transform:scaleX(0.920)">0</span></span><span style="display:inline-flex;justify-content:center;width:4.75px"><span style="display:inline-block;flex:none;transform:scaleX(0.920)">0</span></span></div>
<div class="t" style="left:136.60px;top:242.35px;font-size:9px;line-height:9px;font-family:'Liberation Serif';color:#c4c4c4;font-weight:normal"><span style="display:inline-flex;justify-content:center;width:4.75px"><span style="display:inline-block;flex:none;transform:scaleX(0.920)">-</span></span><span style="display:inline-flex;justify-content:center;width:4.75px"><span style="display:inline-block;flex:none;transform:scaleX(0.920)">3</span></span><span style="display:inline-flex;justify-content:center;width:4.75px"><span style="display:inline-block;flex:none;transform:scaleX(0.920)">0</span></span><span style="display:inline-flex;justify-content:center;width:4.75px"><span style="display:inline-block;flex:none;transform:scaleX(0.920)">.</span></span><span style="display:inline-flex;justify-content:center;width:4.75px"><span style="display:inline-block;flex:none;transform:scaleX(0.920)">0</span></span><span style="display:inline-flex;justify-content:center;width:4.75px"><span style="display:inline-block;flex:none;transform:scaleX(0.920)">0</span></span></div>
<div class="t" style="left:136.60px;top:292.60px;font-size:9px;line-height:9px;font-family:'Liberation Serif';color:#c4c4c4;font-weight:normal"><span style="display:inline-flex;justify-content:center;width:4.75px"><span style="display:inline-block;flex:none;transform:scaleX(0.920)">-</span></span><span style="display:inline-flex;justify-content:center;width:4.75px"><span style="display:inline-block;flex:none;transform:scaleX(0.920)">2</span></span><span style="display:inline-flex;justify-content:center;width:4.75px"><span style="display:inline-block;flex:none;transform:scaleX(0.920)">0</span></span><span style="display:inline-flex;justify-content:center;width:4.75px"><span style="display:inline-block;flex:none;transform:scaleX(0.920)">.</span></span><span style="display:inline-flex;justify-content:center;width:4.75px"><span style="display:inline-block;flex:none;transform:scaleX(0.920)">0</span></span><span style="display:inline-flex;justify-content:center;width:4.75px"><span style="display:inline-block;flex:none;transform:scaleX(0.920)">0</span></span></div>
<div class="t" style="left:136.60px;top:342.85px;font-size:9px;line-height:9px;font-family:'Liberation Serif';color:#c4c4c4;font-weight:normal"><span style="display:inline-flex;justify-content:center;width:4.75px"><span style="display:inline-block;flex:none;transform:scaleX(0.920)">-</span></span><span style="display:inline-flex;justify-content:center;width:4.75px"><span style="display:inline-block;flex:none;transform:scaleX(0.920)">1</span></span><span style="display:inline-flex;justify-content:center;width:4.75px"><span style="display:inline-block;flex:none;transform:scaleX(0.920)">0</span></span><span style="display:inline-flex;justify-content:center;width:4.75px"><span style="display:inline-block;flex:none;transform:scaleX(0.920)">.</span></span><span style="display:inline-flex;justify-content:center;width:4.75px"><span style="display:inline-block;flex:none;transform:scaleX(0.920)">0</span></span><span style="display:inline-flex;justify-content:center;width:4.75px"><span style="display:inline-block;flex:none;transform:scaleX(0.920)">0</span></span></div>
<div class="t" style="left:137.30px;top:393.10px;font-size:9px;line-height:9px;font-family:'Liberation Serif';color:#c4c4c4;font-weight:normal"><span style="display:inline-flex;justify-content:center;width:4.75px"><span style="display:inline-block;flex:none;transform:scaleX(0.920)">0</span></span><span style="display:inline-flex;justify-content:center;width:4.75px"><span style="display:inline-block;flex:none;transform:scaleX(0.920)">.</span></span><span style="display:inline-flex;justify-content:center;width:4.75px"><span style="display:inline-block;flex:none;transform:scaleX(0.920)">0</span></span><span style="display:inline-flex;justify-content:center;width:4.75px"><span style="display:inline-block;flex:none;transform:scaleX(0.920)">0</span></span></div>
<div class="t" style="left:137.30px;top:443.35px;font-size:9px;line-height:9px;font-family:'Liberation Serif';color:#c4c4c4;font-weight:normal"><span style="display:inline-flex;justify-content:center;width:4.75px"><span style="display:inline-block;flex:none;transform:scaleX(0.920)">1</span></span><span style="display:inline-flex;justify-content:center;width:4.75px"><span style="display:inline-block;flex:none;transform:scaleX(0.920)">0</span></span><span style="display:inline-flex;justify-content:center;width:4.75px"><span style="display:inline-block;flex:none;transform:scaleX(0.920)">.</span></span><span style="display:inline-flex;justify-content:center;width:4.75px"><span style="display:inline-block;flex:none;transform:scaleX(0.920)">0</span></span><span style="display:inline-flex;justify-content:center;width:4.75px"><span style="display:inline-block;flex:none;transform:scaleX(0.920)">0</span></span></div>
<div class="t" style="left:137.30px;top:493.60px;font-size:9px;line-height:9px;font-family:'Liberation Serif';color:#c4c4c4;font-weight:normal"><span style="display:inline-flex;justify-content:center;width:4.75px"><span style="display:inline-block;flex:none;transform:scaleX(0.920)">2</span></span><span style="display:inline-flex;justify-content:center;width:4.75px"><span style="display:inline-block;flex:none;transform:scaleX(0.920)">0</span></span><span style="display:inline-flex;justify-content:center;width:4.75px"><span style="display:inline-block;flex:none;transform:scaleX(0.920)">.</span></span><span style="display:inline-flex;justify-content:center;width:4.75px"><span style="display:inline-block;flex:none;transform:scaleX(0.920)">0</span></span><span style="display:inline-flex;justify-content:center;width:4.75px"><span style="display:inline-block;flex:none;transform:scaleX(0.920)">0</span></span></div>
<div class="t" style="left:137.30px;top:543.85px;font-size:9px;line-height:9px;font-family:'Liberation Serif';color:#c4c4c4;font-weight:normal"><span style="display:inline-flex;justify-content:center;width:4.75px"><span style="display:inline-block;flex:none;transform:scaleX(0.920)">3</span></span><span style="display:inline-flex;justify-content:center;width:4.75px"><span style="display:inline-block;flex:none;transform:scaleX(0.920)">0</span></span><span style="display:inline-flex;justify-content:center;width:4.75px"><span style="display:inline-block;flex:none;transform:scaleX(0.920)">.</span></span><span style="display:inline-flex;justify-content:center;width:4.75px"><span style="display:inline-block;flex:none;transform:scaleX(0.920)">0</span></span><span style="display:inline-flex;justify-content:center;width:4.75px"><span style="display:inline-block;flex:none;transform:scaleX(0.920)">0</span></span></div>
<div class="t" style="left:137.30px;top:594.10px;font-size:9px;line-height:9px;font-family:'Liberation Serif';color:#c4c4c4;font-weight:normal"><span style="display:inline-flex;justify-content:center;width:4.75px"><span style="display:inline-block;flex:none;transform:scaleX(0.920)">4</span></span><span style="display:inline-flex;justify-content:center;width:4.75px"><span style="display:inline-block;flex:none;transform:scaleX(0.920)">0</span></span><span style="display:inline-flex;justify-content:center;width:4.75px"><span style="display:inline-block;flex:none;transform:scaleX(0.920)">.</span></span><span style="display:inline-flex;justify-content:center;width:4.75px"><span style="display:inline-block;flex:none;transform:scaleX(0.920)">0</span></span><span style="display:inline-flex;justify-content:center;width:4.75px"><span style="display:inline-block;flex:none;transform:scaleX(0.920)">0</span></span></div>
<div style="position:absolute;left:0px;top:678px;width:1268px;height:16px;background:linear-gradient(#8eaed8 0px,#8eaed8 1px,#eaf3fd 1px,#d8e7f9 3px,#b7d1f2 7px,#c6dbf4 12px,#d0e1f6 16px)"></div>
<div style="position:absolute;left:1204px;top:678px;width:64px;height:16px;background:linear-gradient(#8eaed8 0px,#8eaed8 1px,#c4daf5 1px,#aecbef 4px,#8fb6e6 8px,#84acdf 16px);border-left:1px solid #8eaedc;box-sizing:border-box"></div>
<div style="position:absolute;left:1203px;top:679px;width:1px;height:15px;background:rgba(255,255,255,0.6)"></div>
<div style="position:absolute;left:1205px;top:679px;width:1px;height:15px;background:rgba(255,255,255,0.25)"></div>
<div class="t" style="left:5.21px;top:681.20px;font-size:11.5px;line-height:11.5px;font-family:'Liberation Mono';color:#24509a;transform:scaleX(0.785);font-weight:normal;">Display 1</div>
<div class="t" style="left:1213.71px;top:681.20px;font-size:11.5px;line-height:11.5px;font-family:'Liberation Mono';color:#24509a;transform:scaleX(0.785);font-weight:normal;">Display 2</div>
</body></html>
